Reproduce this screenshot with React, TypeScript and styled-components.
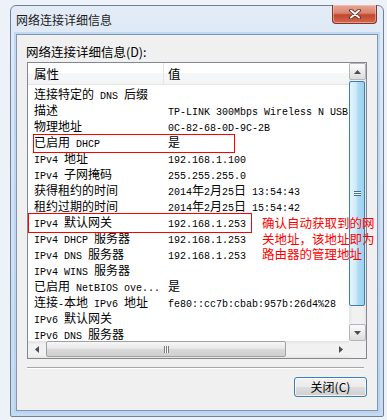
import React from 'react';
import styled, { createGlobalStyle } from 'styled-components';

const rows: Array<[string, string]> = [
  ['连接特定的 DNS 后缀', ''],
  ['描述', 'TP-LINK 300Mbps Wireless N USB Adapter'],
  ['物理地址', '0C-82-68-0D-9C-2B'],
  ['已启用 DHCP', '是'],
  ['IPv4 地址', '192.168.1.100'],
  ['IPv4 子网掩码', '255.255.255.0'],
  ['获得租约的时间', '2014年2月25日 13:54:43'],
  ['租约过期的时间', '2014年2月25日 15:54:42'],
  ['IPv4 默认网关', '192.168.1.253'],
  ['IPv4 DHCP 服务器', '192.168.1.253'],
  ['IPv4 DNS 服务器', '192.168.1.253'],
  ['IPv4 WINS 服务器', ''],
  ['已启用 NetBIOS ove...', '是'],
  ['连接-本地 IPv6 地址', 'fe80::cc7b:cbab:957b:26d4%28'],
  ['IPv6 默认网关', ''],
  ['IPv6 DNS 服务器', ''],
];

const isLatin = (s: string) => /^[\x00-\xff]+$/.test(s);

// SimSun draws latin at half width, so latin runs get their own mono span
function CellText({ text }: { text: string }) {
  const runs = text.split(/([\x00-\xff]+)/).filter(Boolean);
  return (
    <>
      {runs.map((run, i) => (isLatin(run) ? <Latin key={i}>{run}</Latin> : <span key={i}>{run}</span>))}
    </>
  );
}

function Arrow({ dir }: { dir: 'up' | 'down' | 'left' | 'right' }) {
  const points = {
    up: '0,4 3.5,0 7,4',
    down: '0,0 7,0 3.5,4',
    left: '4,0 4,7 0,3.5',
    right: '0,0 0,7 4,3.5',
  }[dir];
  const vertical = dir === 'up' || dir === 'down';
  return (
    <svg width={vertical ? 7 : 4} height={vertical ? 4 : 7} viewBox={vertical ? '0 0 7 4' : '0 0 4 7'}>
      <polygon points={points} fill="#4d4d4d" />
    </svg>
  );
}

function App() {
  return (
    <>
      <GlobalStyle />
      <Window>
        <TitleBar>
          <Title>网络连接详细信息</Title>
          <CloseButton>
            <svg width="12" height="10" viewBox="0 0 12 10">
              <path d="M2 1.5 L10 8.5 M10 1.5 L2 8.5" stroke="#5b1f14" strokeWidth="3.6" strokeLinecap="round" />
              <path d="M2 1.5 L10 8.5 M10 1.5 L2 8.5" stroke="#ffffff" strokeWidth="2" strokeLinecap="round" />
            </svg>
          </CloseButton>
        </TitleBar>
        <Panel>
          <Label>网络连接详细信息(D):</Label>
          <ListBox>
            <Viewport>
              <Header>
                <HeaderCell $first>属性</HeaderCell>
                <HeaderCell>值</HeaderCell>
              </Header>
              <Rows>
                {rows.map(([name, value]) => (
                  <Row key={name}>
                    <Cell $first>
                      <CellText text={name} />
                    </Cell>
                    <Cell>
                      <CellText text={value} />
                    </Cell>
                  </Row>
                ))}
              </Rows>
            </Viewport>
            <VScroll>
              <ScrollButton $boxed>
                <Arrow dir="up" />
              </ScrollButton>
              <VTrack>
                <VThumb>
                  <Grip $vertical />
                </VThumb>
              </VTrack>
              <ScrollButton $boxed>
                <Arrow dir="down" />
              </ScrollButton>
            </VScroll>
            <HScroll>
              <ScrollButton>
                <Arrow dir="left" />
              </ScrollButton>
              <HTrack>
                <HThumb>
                  <Grip />
                </HThumb>
              </HTrack>
              <ScrollButton>
                <Arrow dir="right" />
              </ScrollButton>
            </HScroll>
            <Corner />
          </ListBox>
          <Divider />
          <ButtonRow>
            <DialogButton>关闭(C)</DialogButton>
          </ButtonRow>
        </Panel>

        <Mark $left={22} $top={128} $width={202} $height={19} />
        <Mark $left={17} $top={207} $width={224} $height={20} />
        <Note>
          确认自动获取到的网
          <br />
          关地址，该地址即为
          <br />
          路由器的管理地址
        </Note>
      </Window>
    </>
  );
}

const GlobalStyle = createGlobalStyle`
  html, body {
    margin: 0;
    padding: 0;
  }
  body {
    width: 387px;
    height: 420px;
    overflow: hidden;
    background: #edf2f9;
    font-family: "Noto Sans CJK SC", "Liberation Sans", sans-serif;
    color: #000;
  }
`;

const Window = styled.div`
  position: relative;
  box-sizing: border-box;
  width: 374px;
  height: 412px;
  margin: 5px 0 0 10px;
  padding: 0 5px 5px;
  border: 1px solid #6f819a;
  border-radius: 6px 6px 2px 2px;
  background: linear-gradient(180deg, #e2ebf6 0%, #d3e2f3 45%, #c6dbf1 100%);
  display: flex;
  flex-direction: column;
`;

const TitleBar = styled.div`
  height: 28px;
  display: flex;
  align-items: center;
  justify-content: space-between;
`;

const Title = styled.span`
  font-size: 12px;
  line-height: 16px;
  color: #1b1b1b;
`;

const CloseButton = styled.div`
  align-self: flex-start;
  box-sizing: border-box;
  width: 45px;
  height: 19px;
  margin: -1px 1px 0 0;
  border: 1px solid #7d3628;
  border-top: none;
  border-radius: 0 0 4px 4px;
  background: linear-gradient(180deg, #e9a797 0%, #d88471 45%, #c4462c 55%, #cf6a4f 100%);
  box-shadow: inset 0 0 0 1px rgba(255, 220, 210, 0.45);
  display: flex;
  align-items: center;
  justify-content: center;
`;

const Panel = styled.div`
  flex: 1;
  box-sizing: border-box;
  border: 1px solid #8396b0;
  background: #f0f0f0;
  padding: 9px 10px 0;
  box-shadow: 0 0 0 2px rgba(178, 210, 242, 0.7);
  display: flex;
  flex-direction: column;
`;

const Label = styled.div`
  font-size: 12.5px;
  line-height: 16px;
  height: 16px;
  margin: 0 0 2px -1px;
`;

const ListBox = styled.div`
  box-sizing: border-box;
  height: 297px;
  border: 1px solid #828790;
  background: #fff;
  display: grid;
  grid-template-columns: 1fr 17px;
  grid-template-rows: 1fr 17px;
`;

const Viewport = styled.div`
  overflow: hidden;
  white-space: nowrap;
`;

const Header = styled.div`
  display: flex;
  height: 21px;
  border-bottom: 1px solid #e5e5e5;
  background: linear-gradient(180deg, #ffffff 0%, #ffffff 45%, #f6f7f9 50%, #f3f4f6 100%);
`;

const HeaderCell = styled.div<{ $first?: boolean }>`
  box-sizing: border-box;
  width: ${(p) => (p.$first ? '136px' : 'auto')};
  flex: ${(p) => (p.$first ? 'none' : '1')};
  padding-left: ${(p) => (p.$first ? '6px' : '4px')};
  border-right: ${(p) => (p.$first ? '1px solid #e3e5e8' : 'none')};
  font-size: 12.5px;
  line-height: 21px;
`;

const Rows = styled.div`
  padding-top: 1px;
`;

const Row = styled.div`
  display: grid;
  grid-template-columns: 136px max-content;
  height: 16px;
  line-height: 16px;
  font-size: 12px;
`;

const Cell = styled.div<{ $first?: boolean }>`
  padding-left: ${(p) => (p.$first ? '6px' : '4px')};
  overflow: ${(p) => (p.$first ? 'hidden' : 'visible')};
`;

const Latin = styled.span`
  font-family: "Liberation Mono", "DejaVu Sans Mono", monospace;
  font-size: 10px;
`;

const VScroll = styled.div`
  display: flex;
  flex-direction: column;
  background: linear-gradient(90deg, #e3e3e3 0%, #f1f1f1 20%, #f1f1f1 80%, #e6e6e6 100%);
`;

const HScroll = styled.div`
  display: flex;
  background: linear-gradient(180deg, #e3e3e3 0%, #f1f1f1 20%, #f1f1f1 80%, #e6e6e6 100%);
`;

const Corner = styled.div`
  background: #f0f0f0;
`;

const ScrollButton = styled.div<{ $boxed?: boolean }>`
  box-sizing: border-box;
  width: 17px;
  height: 17px;
  flex: none;
  display: flex;
  align-items: center;
  justify-content: center;
  border: 1px solid ${(p) => (p.$boxed ? '#b5b5b5' : 'transparent')};
  border-radius: 2px;
  background: ${(p) => (p.$boxed ? 'linear-gradient(180deg, #fbfbfb 0%, #ececec 50%, #dcdcdc 100%)' : 'transparent')};
`;

const VTrack = styled.div`
  flex: 1;
  padding-top: 1px;
`;

const VThumb = styled.div`
  box-sizing: border-box;
  height: 225px;
  margin: 0 1px 0 0;
  border: 1px solid #3c7fb1;
  border-radius: 2px;
  background: linear-gradient(90deg, #e4f4fc 0%, #cdeaf9 45%, #aedcf4 55%, #9ed2ef 100%);
  display: flex;
  align-items: center;
  justify-content: center;
`;

const HTrack = styled.div`
  flex: 1;
  padding-left: 1px;
`;

const HThumb = styled.div`
  box-sizing: border-box;
  width: 240px;
  height: 16px;
  border: 1px solid #a1a1a1;
  border-radius: 2px;
  background: linear-gradient(180deg, #f6f6f6 0%, #e9e9e9 45%, #d8d8d8 55%, #cfcfcf 100%);
  display: flex;
  align-items: center;
  justify-content: center;
`;

const Grip = styled.div<{ $vertical?: boolean }>`
  width: ${(p) => (p.$vertical ? '7px' : '5px')};
  height: ${(p) => (p.$vertical ? '5px' : '7px')};
  background: ${(p) =>
    p.$vertical
      ? 'repeating-linear-gradient(180deg, #3e6f95 0 1px, #f2fbff 1px 2px)'
      : 'repeating-linear-gradient(90deg, #7b7b7b 0 1px, #fbfbfb 1px 2px)'};
`;

const Divider = styled.div`
  height: 0;
  margin: 8px 3px 0 0;
  border-top: 1px solid #a6a6a6;
  border-bottom: 1px solid #ffffff;
`;

const ButtonRow = styled.div`
  display: flex;
  justify-content: flex-end;
  margin-top: 8px;
`;

const DialogButton = styled.div`
  box-sizing: border-box;
  width: 73px;
  height: 20px;
  border: 1px solid #3c7fb1;
  border-radius: 3px;
  background: linear-gradient(180deg, #f2f2f2 0%, #ebebeb 48%, #dddddd 52%, #cfcfcf 100%);
  box-shadow: inset 0 0 0 1px rgba(255, 255, 255, 0.7);
  font-size: 12px;
  line-height: 18px;
  text-align: center;
`;

const Mark = styled.div<{ $left: number; $top: number; $width: number; $height: number }>`
  position: absolute;
  left: ${(p) => p.$left}px;
  top: ${(p) => p.$top}px;
  width: ${(p) => p.$width}px;
  height: ${(p) => p.$height}px;
  box-sizing: border-box;
  border: 1px solid #ff0000;
`;

const Note = styled.div`
  position: absolute;
  left: 251px;
  top: 209px;
  font-size: 12.5px;
  line-height: 15.5px;
  color: #ff0000;
  white-space: nowrap;
`;

export default App;
